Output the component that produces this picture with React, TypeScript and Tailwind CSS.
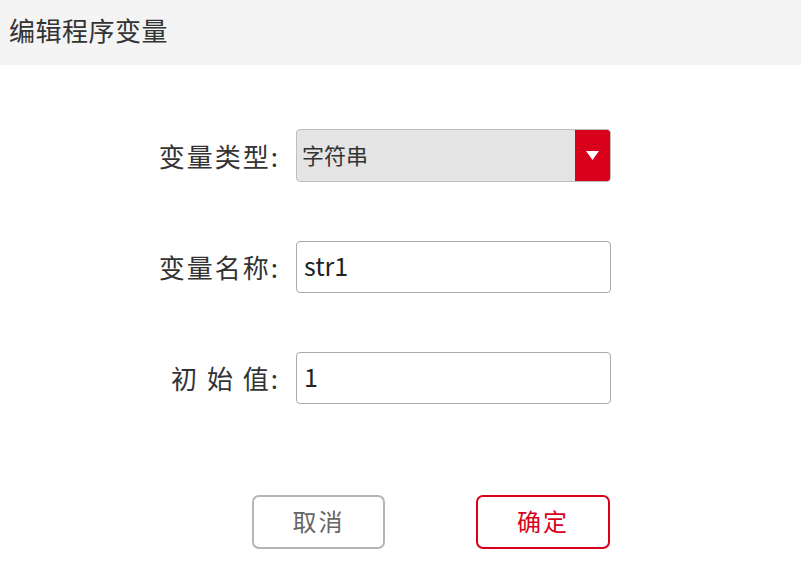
const FONT = { fontFamily: '"Noto Sans CJK SC", "Noto Sans", sans-serif' };

function Row({ label, children }: { label: React.ReactNode; children: React.ReactNode }) {
  return (
    <div className="flex items-center">
      <div className="w-[296px] pr-[16px] text-right text-[26px] leading-none tracking-[2px] text-[#333]">{label}</div>
      {children}
    </div>
  );
}

export default function App() {
  return (
    <div className="h-[586px] w-[801px] bg-white" style={FONT}>
      <div className="flex h-[65px] items-center bg-[#f4f4f4] pl-[9px] pb-[6px] text-[26px] tracking-[0.5px] text-[#333]">编辑程序变量</div>

      <div className="mt-[64px] flex flex-col gap-[59px]">
        <Row label="变量类型:">
          <div className="flex h-[53px] w-[315px] overflow-hidden rounded-[4px] border border-[#bdbdbd] bg-[#e4e4e4]">
            <div className="flex flex-1 items-center pl-[5px] pb-[2px] text-[22px] text-[#333]">字符串</div>
            <div className="flex w-[35px] items-center justify-center bg-[#d9001b]">
              <svg width="13" height="9" viewBox="0 0 13 9">
                <path d="M0 0 H13 L6.5 9 Z" fill="#fff" />
              </svg>
            </div>
          </div>
        </Row>
        <Row label="变量名称:">
          <div className="flex h-[52px] w-[315px] items-center rounded-[4px] border border-[#aaa] bg-white pl-[7px] pb-[2px] text-[25px] text-[#222]">str1</div>
        </Row>
        <Row label="初 始 值:">
          <div className="flex h-[52px] w-[315px] items-center rounded-[4px] border border-[#aaa] bg-white pl-[7px] pb-[2px] text-[25px] text-[#222]">1</div>
        </Row>
      </div>

      <div className="mt-[91px] flex gap-[91px] pl-[252px]">
        <button type="button" className="flex h-[54px] w-[133px] items-center justify-center rounded-[7px] border-2 border-[#b5b5b5] pb-[2px] text-[24px] tracking-[2px] text-[#666]">
          取消
        </button>
        <button type="button" className="flex h-[54px] w-[134px] items-center justify-center rounded-[7px] border-2 border-[#d9001b] pb-[2px] text-[24px] tracking-[2px] text-[#d9001b]">
          确定
        </button>
      </div>
    </div>
  );
}
